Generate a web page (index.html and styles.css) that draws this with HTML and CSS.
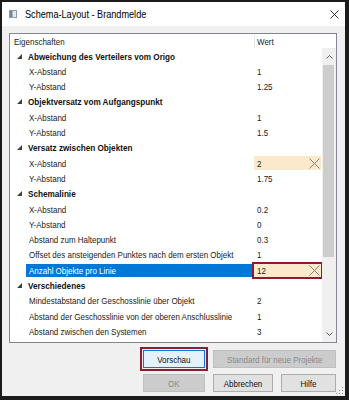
FILE: index.html
```html
<!DOCTYPE html>
<html lang="de">
<head>
    <meta charset="UTF-8">
    <title>Schema-Layout - Brandmelde</title>
    <link rel="stylesheet" href="styles.css">
</head>
<body>

    <div class="window">
        <div class="titlebar">
            <svg class="app-icon" width="8" height="8" viewBox="0 0 8 8">
                <rect x="0.5" y="0.5" width="7" height="7" fill="#e4e9ee" stroke="#8e9aa6"/>
                <rect x="1" y="1" width="2.5" height="6" fill="#70879a"/>
            </svg>
            <span class="title"><span class="txt">Schema-Layout - Brandmelde</span></span>
            <svg class="close" width="9" height="9" viewBox="0 0 9 9">
                <path d="M0.5 0.5 L8.5 8.5 M8.5 0.5 L0.5 8.5" stroke="#222" stroke-width="0.9"/>
            </svg>
        </div>

        <div class="dialog">
            <div class="grid">
                <div class="grid-head">
                    <span class="head-name"><span class="txt">Eigenschaften</span></span>
                    <span class="head-value"><span class="txt">Wert</span></span>
                </div>
                <div class="grid-body">
                    <div class="rows">
                        <div class="row cat"><span class="tri"></span><span class="cat-name">Abweichung des Verteilers vom Origo</span></div>
                        <div class="row"><span class="name"><span class="txt">X-Abstand</span></span><span class="value"><span class="txt">1</span></span></div>
                        <div class="row"><span class="name"><span class="txt">Y-Abstand</span></span><span class="value"><span class="txt">1.25</span></span></div>

                        <div class="row cat"><span class="tri"></span><span class="cat-name">Objektversatz vom Aufgangspunkt</span></div>
                        <div class="row"><span class="name"><span class="txt">X-Abstand</span></span><span class="value"><span class="txt">1</span></span></div>
                        <div class="row"><span class="name"><span class="txt">Y-Abstand</span></span><span class="value"><span class="txt">1.5</span></span></div>

                        <div class="row cat"><span class="tri"></span><span class="cat-name">Versatz zwischen Objekten</span></div>
                        <div class="row"><span class="name"><span class="txt">X-Abstand</span></span><span class="value edit"><span class="txt">2</span>
                            <svg class="clear" width="11" height="11" viewBox="0 0 11 11"><path d="M0.5 0.5 L10.5 10.5 M10.5 0.5 L0.5 10.5" stroke="#777" stroke-width="0.9"/></svg></span></div>
                        <div class="row"><span class="name"><span class="txt">Y-Abstand</span></span><span class="value"><span class="txt">1.75</span></span></div>

                        <div class="row cat"><span class="tri"></span><span class="cat-name">Schemalinie</span></div>
                        <div class="row"><span class="name"><span class="txt">X-Abstand</span></span><span class="value"><span class="txt">0.2</span></span></div>
                        <div class="row"><span class="name"><span class="txt">Y-Abstand</span></span><span class="value"><span class="txt">0</span></span></div>
                        <div class="row"><span class="name"><span class="txt">Abstand zum Haltepunkt</span></span><span class="value"><span class="txt">0.3</span></span></div>
                        <div class="row"><span class="name"><span class="txt">Offset des ansteigenden Punktes nach dem ersten Objekt</span></span><span class="value"><span class="txt">1</span></span></div>
                        <div class="row selected"><span class="name"><span class="txt">Anzahl Objekte pro Linie</span></span><span class="value edit marked"><span class="txt">12</span>
                            <svg class="clear" width="11" height="11" viewBox="0 0 11 11"><path d="M0.5 0.5 L10.5 10.5 M10.5 0.5 L0.5 10.5" stroke="#777" stroke-width="0.9"/></svg></span></div>

                        <div class="row cat"><span class="tri"></span><span class="cat-name">Verschiedenes</span></div>
                        <div class="row"><span class="name"><span class="txt">Mindestabstand der Geschosslinie über Objekt</span></span><span class="value"><span class="txt">2</span></span></div>
                        <div class="row"><span class="name"><span class="txt">Abstand der Geschosslinie von der oberen Anschlusslinie</span></span><span class="value"><span class="txt">1</span></span></div>
                        <div class="row"><span class="name"><span class="txt">Abstand zwischen den Systemen</span></span><span class="value"><span class="txt">3</span></span></div>
                    </div>

                    <div class="scrollbar">
                        <div class="arrow">
                            <svg width="7" height="4" viewBox="0 0 7 4"><path d="M0.5 3.5 L3.5 0.5 L6.5 3.5" fill="none" stroke="#606060" stroke-width="1"/></svg>
                        </div>
                        <div class="thumb"></div>
                        <div class="track"></div>
                        <div class="arrow">
                            <svg width="7" height="4" viewBox="0 0 7 4"><path d="M0.5 0.5 L3.5 3.5 L6.5 0.5" fill="none" stroke="#606060" stroke-width="1"/></svg>
                        </div>
                    </div>
                </div>
            </div>

            <div class="buttons">
                <div class="btn-row">
                    <button class="btn default marked"><span class="txt">Vorschau</span></button>
                    <button class="btn wide" disabled><span class="txt">Standard für neue Projekte</span></button>
                </div>
                <div class="btn-row">
                    <button class="btn" disabled><span class="txt">OK</span></button>
                    <button class="btn cancel"><span class="txt">Abbrechen</span></button>
                    <button class="btn help"><span class="txt">Hilfe</span></button>
                </div>
            </div>

            <svg class="grip" width="8" height="8" viewBox="0 0 8 8">
                <rect x="6" y="0" width="1" height="1" fill="#9a9a9a"/>
                <rect x="3" y="3" width="1" height="1" fill="#9a9a9a"/>
                <rect x="6" y="3" width="1" height="1" fill="#9a9a9a"/>
                <rect x="0" y="6" width="1" height="1" fill="#9a9a9a"/>
                <rect x="3" y="6" width="1" height="1" fill="#9a9a9a"/>
                <rect x="6" y="6" width="1" height="1" fill="#9a9a9a"/>
            </svg>
        </div>
    </div>

</body>
</html>
```

FILE: styles.css
```css
/* General */
* {
    box-sizing: border-box;
}

body {
    margin: 0;
    background: #1b1b1b;
    font-family: "Liberation Sans", Arial, sans-serif;
    font-size: 9.5px;
    color: #1a1a1a;
}

/* the dialog font is narrower than Arial */
.txt,
.cat-name {
    display: inline-block;
    white-space: nowrap;
    transform: scaleX(0.84);
    transform-origin: 0 50%;
}

.window {
    width: 349px;
    height: 400px;
    border-style: solid;
    border-color: #1b1b1b;
    border-width: 2px 4px 4px 2px;
    background: #f0f0f0;
    display: flex;
    flex-direction: column;
}

/* Title bar */
.titlebar {
    height: 24px;
    background: #fff;
    display: flex;
    align-items: center;
    padding: 0 6px 0 7px;
}

.app-icon {
    margin-right: 8px;
}

.title {
    flex: 1;
    font-size: 11px;
    color: #000;
}

.title .txt {
    transform: scaleX(0.83);
}

/* Dialog */
.dialog {
    position: relative;
    flex: 1;
    padding: 7px 8px 0 7px;
}

.grid {
    height: 310px;
    background: #fff;
    border: 1px solid #828790;
    display: flex;
    flex-direction: column;
}

.grid-head {
    height: 14px;
    display: flex;
    align-items: center;
    color: #222;
}

.head-name {
    width: 244px;
    padding-left: 4px;
}

.head-value {
    align-self: stretch;
    display: flex;
    align-items: center;
    margin-top: 1px;
    padding-left: 2px;
    border-left: 1px solid #e5e5e5;
}

.grid-body {
    flex: 1;
    display: flex;
    overflow: hidden;
}

.rows {
    flex: 1;
    overflow: hidden;
    padding-top: 0.4px;
}

/* Rows */
.row {
    height: 15.3px;
    display: flex;
    white-space: nowrap;
}

.row.cat {
    align-items: center;
    font-weight: bold;
    color: #111;
}

.row.cat .cat-name {
    transform: scaleX(0.86);
}

.tri {
    width: 0;
    height: 0;
    margin-left: 7px;
    margin-right: 6px;
    border-style: solid;
    border-width: 0 0 5px 5px;
    border-color: transparent transparent #404040 transparent;
}

.name {
    flex: none;
    width: 227px;
    margin: 1px 0 1px 16px;
    padding-left: 3px;
    display: flex;
    align-items: center;
}

.value {
    flex: none;
    width: 67px;
    margin: 1px 0 1px 1px;
    padding-left: 3px;
    display: flex;
    align-items: center;
    justify-content: space-between;
}

.value.edit {
    background: #faeacb;
    padding-right: 1px;
}

.row.selected .name {
    background: #0078d7;
    color: #fff;
}

/* red marker frame from the screenshot */
.marked {
    outline: 2px solid #8d1c31;
    outline-offset: 0;
}

/* Scrollbar */
.scrollbar {
    width: 14px;
    background: #f0f0f0;
    display: flex;
    flex-direction: column;
}

.arrow {
    height: 17px;
    display: flex;
    align-items: center;
    justify-content: center;
}

.thumb {
    height: 192px;
    margin: 0 2px 0 1px;
    background: #cdcdcd;
}

.track {
    flex: 1;
}

/* Buttons */
.buttons {
    margin-top: 7px;
    padding-right: 1px;
    display: flex;
    flex-direction: column;
    align-items: flex-end;
    gap: 6px;
}

.btn-row {
    display: flex;
    gap: 8px;
}

.btn {
    width: 62px;
    height: 18px;
    padding: 0;
    font-family: inherit;
    font-size: 9.5px;
    color: #111;
    background: #e1e1e1;
    border: 1px solid #adadad;
}

.btn .txt {
    transform-origin: 50% 50%;
}

.btn.default {
    background: #e5f1fb;
    border-color: #0078d7;
}

.btn.marked {
    outline-offset: 1px;
}

.btn.wide {
    width: 123px;
}

.btn:disabled {
    background: #cccccc;
    border-color: #bfbfbf;
    color: #8a8a8a;
}

.btn.cancel {
    width: 60px;
}

.btn.help {
    width: 55px;
}

.grip {
    position: absolute;
    right: 1px;
    bottom: 1px;
}
```
